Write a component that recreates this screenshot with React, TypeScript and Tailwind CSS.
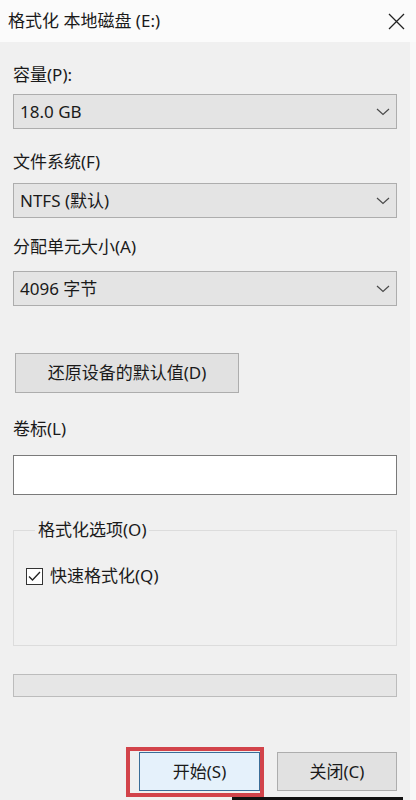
import React from 'react'

const font = { fontFamily: "'Noto Sans', 'Noto Sans CJK SC', sans-serif" }

function Chevron() {
  return (
    <svg width="14" height="8" viewBox="0 0 14 8" className="text-[#4a4a4a]">
      <polyline points="1,1 7,6.5 13,1" fill="none" stroke="currentColor" strokeWidth="1.2" />
    </svg>
  )
}

function Select({ value }: { value: string }) {
  return (
    <div className="flex items-center justify-between h-[35px] border border-[#adadad] bg-[#e4e4e4] pl-[6px] pr-[6px]">
      <span className="text-[17px] leading-6 text-[#1a1a1a]">{value}</span>
      <Chevron />
    </div>
  )
}

function Label({ children, className }: { children: React.ReactNode; className?: string }) {
  return <div className={`text-[17px] leading-6 text-[#1a1a1a] ${className ?? ''}`}>{children}</div>
}

export default function App() {
  return (
    <div className="w-[416px] h-[800px] bg-[#f8f8f8] overflow-hidden" style={font}>
      <div className="w-[410px] h-full bg-[#f0f0f0] flex flex-col">
        {/* title bar */}
        <div className="h-[42px] bg-[#fbfbfb] flex items-center justify-between pl-[8px] pr-[11px] w-[416px]">
          <span className="text-[17px] leading-6 text-[#1a1a1a]">格式化 本地磁盘 (E:)</span>
          <svg width="17" height="17" viewBox="0 0 17 17" className="text-[#222]">
            <path d="M1 1 L16 16 M16 1 L1 16" stroke="currentColor" strokeWidth="1.3" />
          </svg>
        </div>

        <div className="px-[13px] flex flex-col">
          <Label className="mt-[21px]">容量(P):</Label>
          <div className="mt-[7px]"><Select value="18.0 GB" /></div>

          <Label className="mt-[21px]">文件系统(F)</Label>
          <div className="mt-[9px]"><Select value="NTFS (默认)" /></div>

          <Label className="mt-[17px]">分配单元大小(A)</Label>
          <div className="mt-[12px]"><Select value="4096 字节" /></div>

          <button className="mt-[47px] ml-[2px] w-[224px] h-[40px] border border-[#adadad] bg-[#e1e1e1] text-[17px] leading-6 text-[#1a1a1a]">
            还原设备的默认值(D)
          </button>

          <Label className="mt-[24px]">卷标(L)</Label>
          <div className="mt-[14px] h-[40px] border border-[#7a7a7a] bg-white" />

          <fieldset className="mt-[23px] h-[128px] border border-[#dcdcdc] px-[12px]">
            <legend className="ml-[9px] px-[3px] text-[17px] leading-6 text-[#1a1a1a]">格式化选项(O)</legend>
            <div className="flex items-center gap-[7px] mt-[22px]">
              <div className="w-[17px] h-[17px] border border-[#333] bg-white flex items-center justify-center">
                <svg width="13" height="11" viewBox="0 0 13 11">
                  <polyline points="1,5.5 4.5,9 12,1" fill="none" stroke="#222" strokeWidth="1.3" />
                </svg>
              </div>
              <span className="text-[17px] leading-6 text-[#1a1a1a]">快速格式化(Q)</span>
            </div>
          </fieldset>

          <div className="mt-[28px] h-[23px] border border-[#bcbcbc] bg-[#e6e6e6]" />

          <div className="mt-[50px] flex items-start">
            <div className="ml-[113px] w-[138px] h-[50px] border-[4px] border-[#d2434a] pl-[9px] pr-0 pt-[1px]">
              <button className="w-[121px] h-[39px] border border-[#3a6d98] bg-[#e5f1fb] text-[17px] leading-6 text-[#1a1a1a]">
                开始(S)
              </button>
            </div>
            <button className="ml-[13px] mt-[5px] w-[123px] h-[39px] border border-[#adadad] bg-[#e1e1e1] text-[17px] leading-6 text-[#1a1a1a]">
              关闭(C)
            </button>
          </div>
          <div className="ml-[219px] w-[171px] h-[3px] bg-[#111]" />
        </div>
      </div>
    </div>
  )
}
